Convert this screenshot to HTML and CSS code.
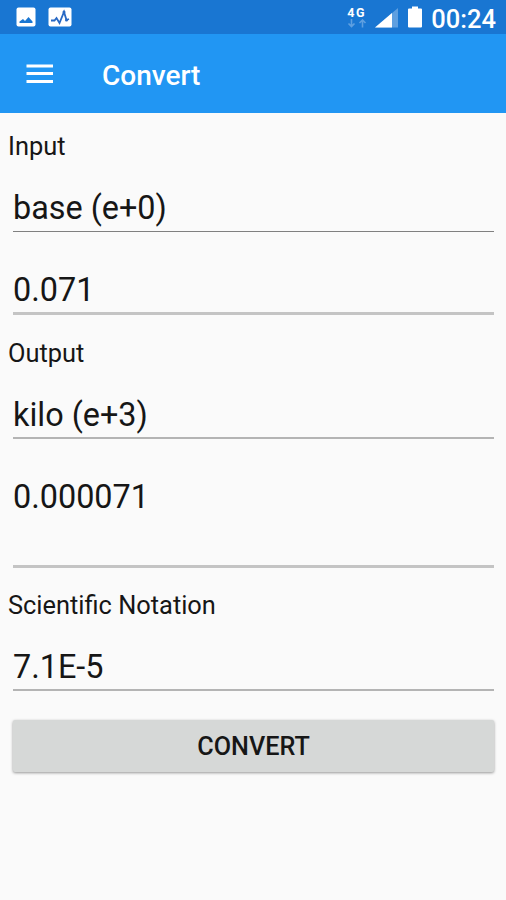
FILE: index.html
```html
<!DOCTYPE html>
<html lang="en">
<head>
<meta charset="utf-8">
<meta name="viewport" content="width=device-width, initial-scale=1">
<title>Convert</title>
<link rel="stylesheet" href="styles.css">
</head>
<body>
	<div class="status-bar">
		<svg class="picture" width="20" height="20" viewBox="0 0 20 20">
			<rect x="0.5" y="0.5" width="19" height="19" rx="2" fill="#fff"/>
			<path d="M3.5 16v-1.500L7 12l2 2 3.500-4 4 4.500V16z" fill="#1976d2"/>
		</svg>
		<svg class="activity" width="24" height="20" viewBox="0 0 24 20">
			<rect x="0.5" y="0.5" width="23" height="19" rx="2" fill="#fff"/>
			<path d="M3 13.500h3.500l2-2.500 3 5 4.500-11 2.500 8 2.500-1" fill="none" stroke="#2869c4" stroke-width="1.800"/>
			<circle cx="16" cy="5" r="1.500" fill="#2869c4"/>
			<circle cx="18.500" cy="13" r="1.500" fill="#2869c4"/>
		</svg>
		<div class="network">
			<span>4G</span>
			<svg width="20" height="9" viewBox="0 0 20 9">
				<path d="M4.500 0v7M1.500 4.500l3 3 3-3M15.500 8.500v-7M12.500 4l3-3 3 3" fill="none" stroke="#5e9fe0" stroke-width="1.600"/>
			</svg>
		</div>
		<svg class="signal" width="23" height="20" viewBox="0 0 23 20">
			<path d="M0 19.500L23 0v19.500z" fill="#5e9fe0"/>
			<path d="M0 19.500L17 5v14.500z" fill="#fff"/>
		</svg>
		<svg class="battery" width="14" height="22" viewBox="0 0 14 22">
			<path d="M1 2.500h3V0.500h6v2h3q1 0 1 1v17q0 1-1 1H1q-1 0-1-1v-17q0-1 1-1z" fill="#fff"/>
		</svg>
		<span class="clock">00:24</span>
	</div>
	<div class="toolbar">
		<svg class="menu" width="28" height="20" viewBox="0 0 28 20">
			<path d="M0.500 2h26.500M0.500 9.500h26.500M0.500 17.500h26.500" stroke="#fff" stroke-width="3"/>
		</svg>
		<h1>Convert</h1>
	</div>
	<div class="content">
		<div class="label">Input</div>
		<div class="field input-unit">base (e+0)</div>
		<div class="field input-value">0.071</div>
		<div class="label">Output</div>
		<div class="field output-unit">kilo (e+3)</div>
		<div class="field output-value">0.000071</div>
		<div class="label">Scientific Notation</div>
		<div class="field scientific">7.1E-5</div>
		<button class="convert">CONVERT</button>
	</div>
</body>
</html>
```

FILE: styles.css
```css
* {box-sizing: border-box;}

body {
	margin: 0;
	min-height: 900px;
	color: #161616;
	font-family: Roboto, "Liberation Sans", sans-serif;
	background: #fafafa;
}

svg {
	display: block;
	flex: none;
}

.status-bar {
	display: flex;
	align-items: flex-start;
	height: 34px;
	padding: 7px 10px 0 16px;
	color: #fff;
	background: #1976d2;
}

.activity {margin-left: 12px;}

.network {
	width: 20px;
	margin-left: auto;
	font-size: 12.500px;
	font-weight: bold;
	line-height: 12px;
	letter-spacing: 1.5px;
}
.network span {display: block;}

.signal {margin: 1px 0 0 8px;}
.battery {margin: -1px 0 0 10px;}

.clock {
	margin-left: 9px;
	font-size: 25.500px;
	font-weight: 500;
	line-height: 24px;
}

.toolbar {
	display: flex;
	align-items: center;
	height: 79px;
	padding-left: 26px;
	color: #fff;
	background: #2196f3;
}

h1 {
	margin: 4px 0 0 48px;
	font-size: 28px;
	font-weight: 500;
	line-height: 32px;
}

.content {
	display: flex;
	flex-direction: column;
	padding: 18px 12px 0 13px;
}

.label {
	margin-left: -5px;
	font-size: 25.400px;
	line-height: 30px;
}

.field {
	height: 48px;
	font-size: 32.400px;
	line-height: 48px;
	border-bottom: 2px solid #b4b4b4;
}

.input-unit {
	margin-top: 23px;
	border-bottom: 1px solid #808080;
}
.input-value {
	height: 49px;
	margin: 34px 0 23px;
	border-bottom: 3px solid #c4c4c4;
}
.output-unit {margin-top: 23px;}
.output-value {
	height: 95px;
	margin: 34px 0 22px;
	border-bottom: 3px solid #c4c4c4;
}
.scientific {margin-top: 23px;}

.convert {
	height: 52px;
	margin-top: 29px;
	padding: 2px 0 0;
	border: none;
	border-radius: 2px;
	color: #161616;
	font: 500 25.200px/50px Roboto, "Liberation Sans", sans-serif;
	background: #d6d8d7;
	box-shadow: 0 1px 3px rgba(0, 0, 0, 0.4);
}
```
